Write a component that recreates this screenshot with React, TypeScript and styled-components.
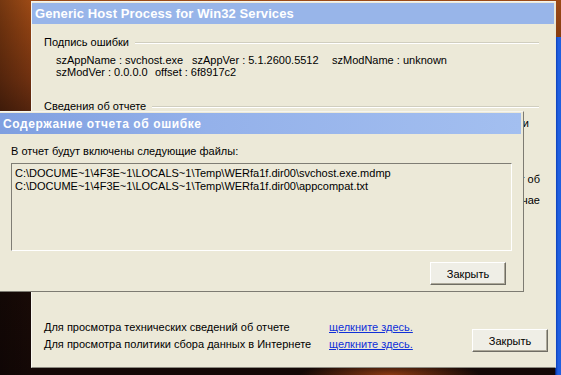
import React from "react";
import styled, { createGlobalStyle } from "styled-components";

const Global = createGlobalStyle`
  html, body { margin: 0; padding: 0; background: #140806; }
  body { font-family: "Liberation Sans", Arial, sans-serif; font-size: 11px; color: #000; }
  * { box-sizing: border-box; }
`;

const Desktop = styled.div`
  position: relative;
  width: 561px;
  height: 375px;
  overflow: hidden;
  background:
    radial-gradient(ellipse 90px 14px at 390px 375px, #8a3a12 0%, rgba(138,58,18,0) 100%),
    linear-gradient(90deg, rgba(0,0,0,0.25) 0%, rgba(0,0,0,0) 30px),
    linear-gradient(180deg, #9c4a16 0%, #8a3f12 30px, #6e3010 80px, #3a180a 140px, #1c0c07 220px, #140806 100%);
`;

const BackWindow = styled.div`
  position: absolute;
  left: 555px;
  top: 37px;
  width: 40px;
  height: 360px;
  background: linear-gradient(90deg, #0b3fb8 0px, #1f5ee0 2px, #2a66e6 100%);
  border-left: 1px solid #0a2a80;
`;

const MainWindow = styled.div`
  position: absolute;
  left: 31px;
  top: 1px;
  width: 525px;
  height: 367px;
  background: #ece9d8;
  border: 1px solid;
  border-color: #f4f3ec #e8e6da #8c8a80 #f8f7f0;
  padding: 1px 1px 0 0;
  display: flex;
  flex-direction: column;
`;

const TitleBar = styled.div<{ $grad?: boolean; $size?: number }>`
  height: 21px;
  flex: none;
  display: flex;
  align-items: center;
  padding-left: 3px;
  background: ${(p) => (p.$grad ? "linear-gradient(90deg, #7f9fe0 0%, #94b1ea 40%, #a3bff0 100%)" : "#98b5e9")};
  color: #fff;
  font-family: "Liberation Sans", Arial, sans-serif;
  font-weight: bold;
  font-size: ${(p) => p.$size ?? 13}px;
  letter-spacing: ${(p) => (p.$grad ? "0.6px" : "0.1px")};
  white-space: nowrap;
`;

const Body = styled.div`
  flex: 1;
  display: flex;
  flex-direction: column;
  padding: 12px 6px 15px 12px;
`;

const GroupHeader = styled.div`
  display: flex;
  align-items: center;
  line-height: 13px;
  height: 13px;
  margin-right: 9px;
`;

const GroupLine = styled.div`
  flex: 1;
  margin-left: 6px;
  border-top: 1px solid #d0cebf;
  border-bottom: 1px solid #fff;
`;

const Details = styled.div`
  margin: 5px 0 0 12px;
  line-height: 12px;
`;

const DetailRow = styled.div`
  display: flex;
  white-space: nowrap;
`;

const Field = styled.span<{ $w?: number }>`
  display: inline-block;
  flex: none;
  width: ${(p) => (p.$w ? `${p.$w}px` : "auto")};
`;

const Section2 = styled.div`
  margin-top: 22px;
`;

const HiddenText = styled.div<{ $mt: number; $pr: number }>`
  display: flex;
  justify-content: flex-end;
  white-space: nowrap;
  line-height: 13px;
  margin-top: ${(p) => p.$mt}px;
  padding-right: ${(p) => p.$pr}px;
`;

const Footer = styled.div`
  margin-top: auto;
  display: flex;
  align-items: flex-end;
`;

const InfoGrid = styled.div`
  display: grid;
  grid-template-columns: 285px auto;
  grid-auto-rows: 17px;
  align-items: center;
  white-space: nowrap;
`;

const Link = styled.a`
  color: #1030d8;
  text-decoration: underline;
  cursor: pointer;
`;

const Button = styled.button<{ $mr?: number }>`
  width: 76px;
  height: 23px;
  margin-left: auto;
  margin-right: ${(p) => p.$mr ?? 0}px;
  background: #efeee6;
  border: 1px solid;
  border-color: #ffffff #6f6d64 #6f6d64 #ffffff;
  box-shadow: inset -1px -1px 0 #aca899;
  font-family: "Liberation Sans", Arial, sans-serif;
  font-size: 11px;
  color: #000;
  padding: 0;
`;

const Dialog = styled.div`
  position: absolute;
  left: -1px;
  top: 111px;
  width: 525px;
  height: 181px;
  background: #ece9d8;
  border: 1px solid;
  border-color: #f6f5ee #7d7b72 #7d7b72 #f6f5ee;
  padding: 1px 2px 0 0;
  display: flex;
  flex-direction: column;
`;

const DialogBody = styled.div`
  flex: 1;
  display: flex;
  flex-direction: column;
  padding: 11px 0 8px 11px;
`;

const Label = styled.div`
  line-height: 13px;
  white-space: nowrap;
`;

const ListBox = styled.div`
  margin-top: 5px;
  width: 501px;
  height: 88px;
  background: #ece9d8;
  border: 1px solid;
  border-color: #7f7d74 #ffffff #ffffff #7f7d74;
  padding: 3px 0 0 3px;
  line-height: 13px;
  white-space: nowrap;
`;

const DialogActions = styled.div`
  margin-top: 11px;
  display: flex;
`;

export default function App() {
  return (
    <>
      <Global />
      <Desktop>
        <BackWindow />
        <MainWindow>
          <TitleBar>Generic Host Process for Win32 Services</TitleBar>
          <Body>
            <GroupHeader>
              Подпись ошибки
              <GroupLine />
            </GroupHeader>
            <Details>
              <DetailRow>
                <Field $w={136}>szAppName : svchost.exe</Field>
                <Field $w={140}>szAppVer : 5.1.2600.5512</Field>
                <Field>szModName : unknown</Field>
              </DetailRow>
              <DetailRow>
                <Field $w={99}>szModVer : 0.0.0.0</Field>
                <Field>offset : 6f8917c2</Field>
              </DetailRow>
            </Details>
            <Section2>
              <GroupHeader>
                Сведения об отчете
                <GroupLine />
              </GroupHeader>
              <HiddenText $mt={4} $pr={19}>сведения и</HiddenText>
              <HiddenText $mt={43} $pr={8}>создан отчет об</HiddenText>
              <HiddenText $mt={8} $pr={8}>В этом случае</HiddenText>
            </Section2>
            <Footer>
              <InfoGrid>
                <span>Для просмотра технических сведений об отчете</span>
                <Link>щелкните здесь.</Link>
                <span>Для просмотра политики сбора данных в Интернете</span>
                <Link>щелкните здесь.</Link>
              </InfoGrid>
              <Button>Закрыть</Button>
            </Footer>
          </Body>
        </MainWindow>
        <Dialog>
          <TitleBar $grad $size={12}>Содержание отчета об ошибке</TitleBar>
          <DialogBody>
            <Label>В отчет будут включены следующие файлы:</Label>
            <ListBox>
              <div>C:\DOCUME~1\4F3E~1\LOCALS~1\Temp\WERfa1f.dir00\svchost.exe.mdmp</div>
              <div>C:\DOCUME~1\4F3E~1\LOCALS~1\Temp\WERfa1f.dir00\appcompat.txt</div>
            </ListBox>
            <DialogActions>
              <Button $mr={15}>Закрыть</Button>
            </DialogActions>
          </DialogBody>
        </Dialog>
      </Desktop>
    </>
  );
}
